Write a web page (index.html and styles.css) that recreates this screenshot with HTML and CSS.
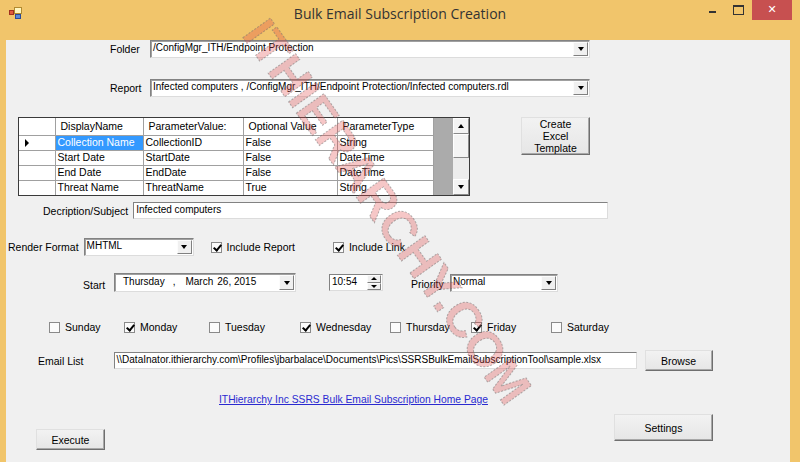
FILE: index.html
```html
<!DOCTYPE html>
<html lang="en">
<head>
    <meta charset="UTF-8">
    <meta name="viewport" content="width=device-width, initial-scale=1.0">
    <title>Bulk Email Subscription Creation</title>
    <link rel="stylesheet" href="styles.css">
</head>
<body>
    <div class="titlebar">
        <div class="tb-left">
            <svg class="app-icon" width="14" height="12" viewBox="0 0 14 12">
                <rect x="0.5" y="3.5" width="4" height="4" fill="#e05a3a" stroke="#a03020"/>
                <rect x="5.5" y="0.5" width="7" height="6" fill="#fff6c0" stroke="#b08a30"/>
                <rect x="6.5" y="7.5" width="5" height="4" fill="#5a8ad8" stroke="#2a4a98"/>
            </svg>
        </div>
        <div class="title">Bulk Email Subscription Creation</div>
        <div class="tb-right">
            <div class="ctl ctl-min"></div>
            <div class="ctl ctl-max"></div>
            <div class="ctl ctl-close">&#x2715;</div>
        </div>
    </div>

    <div class="client">
        <div class="row row-folder">
            <span class="lbl">Folder</span>
            <div class="combo combo-wide"><span class="val">/ConfigMgr_ITH/Endpoint Protection</span><span class="arrow"></span></div>
        </div>

        <div class="row row-report">
            <span class="lbl">Report</span>
            <div class="combo combo-wide"><span class="val">Infected computers , /ConfigMgr_ITH/Endpoint Protection/Infected computers.rdl</span><span class="arrow"></span></div>
        </div>

        <div class="row row-grid">
            <div class="grid">
                <div class="grid-body">
                    <table class="params">
                        <tr class="head">
                            <td class="rh"></td>
                            <td class="c1">DisplayName</td>
                            <td class="c2">ParameterValue:</td>
                            <td class="c3">Optional Value</td>
                            <td class="c4">ParameterType</td>
                        </tr>
                        <tr>
                            <td class="rh"><span class="cur"></span></td>
                            <td class="sel">Collection Name</td>
                            <td>CollectionID</td>
                            <td>False</td>
                            <td>String</td>
                        </tr>
                        <tr>
                            <td class="rh"></td>
                            <td>Start Date</td>
                            <td>StartDate</td>
                            <td>False</td>
                            <td>DateTime</td>
                        </tr>
                        <tr>
                            <td class="rh"></td>
                            <td>End Date</td>
                            <td>EndDate</td>
                            <td>False</td>
                            <td>DateTime</td>
                        </tr>
                        <tr>
                            <td class="rh"></td>
                            <td>Threat Name</td>
                            <td>ThreatName</td>
                            <td>True</td>
                            <td>String</td>
                        </tr>
                    </table>
                    <div class="grid-empty"></div>
                </div>
                <div class="vscroll">
                    <div class="sb-btn"><span class="up"></span></div>
                    <div class="sb-track"><div class="sb-thumb"></div></div>
                    <div class="sb-btn"><span class="down"></span></div>
                </div>
            </div>
            <button class="btn btn-template">Create<br>Excel<br>Template</button>
        </div>

        <div class="row row-subject">
            <span class="lbl">Decription/Subject</span>
            <div class="textbox tb-subject">Infected computers</div>
        </div>

        <div class="row row-render">
            <span class="lbl">Render Format</span>
            <div class="combo combo-render"><span class="val">MHTML</span><span class="arrow"></span></div>
            <label class="check chk-report"><span class="box on"></span>Include Report</label>
            <label class="check chk-link"><span class="box on"></span>Include Link</label>
        </div>

        <div class="row row-start">
            <span class="lbl lbl-start">Start</span>
            <div class="combo combo-date">
                <span class="val">
                    <span class="d-day">Thursday</span><span class="d-sep">,</span><span class="d-month">March</span><span class="d-num">26, 2015</span>
                </span>
                <span class="arrow"></span>
            </div>
            <div class="spin">
                <span class="val">10:54</span>
                <span class="spin-btns"><span class="sp"><span class="up"></span></span><span class="sp"><span class="down"></span></span></span>
            </div>
            <span class="lbl lbl-priority">Priority</span>
            <div class="combo combo-priority"><span class="val">Normal</span><span class="arrow"></span></div>
        </div>

        <div class="row row-days">
            <label class="check"><span class="box"></span>Sunday</label>
            <label class="check"><span class="box on"></span>Monday</label>
            <label class="check"><span class="box"></span>Tuesday</label>
            <label class="check"><span class="box on"></span>Wednesday</label>
            <label class="check"><span class="box"></span>Thursday</label>
            <label class="check"><span class="box on"></span>Friday</label>
            <label class="check"><span class="box"></span>Saturday</label>
        </div>

        <div class="row row-email">
            <span class="lbl">Email List</span>
            <div class="textbox tb-email">\\DataInator.ithierarchy.com\Profiles\jbarbalace\Documents\Pics\SSRSBulkEmailSubscriptionTool\sample.xlsx</div>
            <button class="btn btn-browse">Browse</button>
        </div>

        <div class="row row-link">
            <a class="home" href="#">ITHierarchy Inc SSRS Bulk Email Subscription Home Page</a>
        </div>

        <div class="row row-bottom">
            <button class="btn btn-execute">Execute</button>
            <button class="btn btn-settings">Settings</button>
        </div>
    </div>

    <div class="taskbar"><span class="tb-dark"></span><span class="tb-sep"></span></div>

    <!-- watermark over the whole shot -->
    <svg class="watermark" width="800" height="462" viewBox="0 0 800 462">
        <text x="241" y="35" transform="rotate(54.6 241 35)">ITHIERARCHY.COM</text>
    </svg>
</body>
</html>
```

FILE: styles.css
```css
*{
    margin: 0;
    padding: 0;
    box-sizing: border-box;
}
body{
    width: 800px;
    height: 462px;
    overflow: hidden;
    position: relative;
    background-color: #f1c56b;
    font-family: "Liberation Sans", Arial, sans-serif;
    font-size: 10.5px;
    color: #000;
}

/* title bar */
.titlebar{
    height: 28px;
    display: grid;
    grid-template-columns: 1fr auto 1fr;
}
.tb-left{
    padding: 7px 0 0 9px;
}
.title{
    font-family: "Open Sans", sans-serif;
    font-size: 14px;
    color: #333;
    padding-top: 4px;
}
.tb-right{
    display: flex;
    justify-content: flex-end;
    padding-right: 8px;
}
.ctl{
    width: 25px;
    height: 20px;
    position: relative;
}
.ctl-min::before{
    content: '';
    position: absolute;
    left: 9px;
    top: 11px;
    width: 7px;
    height: 2px;
    background: #333;
}
.ctl-max::before{
    content: '';
    position: absolute;
    left: 8px;
    top: 5px;
    width: 9px;
    height: 7px;
    border: 1px solid #333;
    border-top-width: 2px;
}
.ctl-close{
    width: 40px;
    margin-left: 2px;
    background-color: #c75050;
    color: #fff;
    font-size: 11px;
    font-family: "DejaVu Sans", sans-serif;
    text-align: center;
    line-height: 20px;
}

/* client area */
.client{
    margin-left: 6px;
    width: 784px;
    height: 424px;
    background-color: #f0f0f0;
}
.taskbar{
    margin-top: 3px;
    height: 7px;
    background-color: #e6e6e6;
    display: flex;
}
.tb-dark{
    width: 15px;
    background-color: #2a2018;
}
.tb-sep{
    width: 1px;
    margin-left: 30px;
    background-color: #999;
}

.row{
    display: flex;
    align-items: center;
}
.lbl{
    white-space: nowrap;
}

.row-folder{ margin-top: 12px; height: 18px; padding-left: 104px; }
.row-report{ margin-top: 21px; height: 18px; padding-left: 104px; }
.row-folder .lbl, .row-report .lbl{ width: 40px; }

.combo{
    display: flex;
    height: 18px;
    background-color: #fff;
    border: 1px solid;
    border-color: #828282 #dcdcdc #dcdcdc #828282;
    box-shadow: inset 1px 1px 0 #a0a0a0;
}
.combo .val{
    flex: 1;
    padding: 1px 0 0 2px;
    white-space: nowrap;
    overflow: hidden;
    font-size: 10px;
}
.combo .arrow, .spin .sp{
    width: 15px;
    margin: 1px 1px 1px 0;
    border: 1px solid;
    border-color: #fcfcfc #808080 #808080 #fcfcfc;
    background-color: #f0f0f0;
    display: flex;
    align-items: center;
    justify-content: center;
}
.combo .arrow::before{
    content: '';
    border-top: 4px solid #000;
    border-left: 3.5px solid transparent;
    border-right: 3.5px solid transparent;
}
.combo-wide{ width: 440px; }

/* parameter grid */
.row-grid{
    margin-top: 20px;
    height: 79px;
    padding-left: 12px;
    align-items: flex-start;
}
.grid{
    width: 452px;
    height: 79px;
    border: 1px solid #3a3a3a;
    display: flex;
    background-color: #ababab;
}
.grid-body{
    width: 434px;
    overflow: hidden;
    display: flex;
    align-items: flex-start;
}
.params{
    border-collapse: collapse;
    table-layout: fixed;
    width: 414px;
    background-color: #fff;
    font-size: 10.5px;
}
.params td{
    height: 15px;
    line-height: 13px;
    padding: 0 0 0 2px;
    border: 1px solid #a0a0a0;
    border-top: none;
    white-space: nowrap;
    overflow: hidden;
}
.params .head td{
    height: 17px;
    padding-left: 5px;
    border-bottom: 1px solid #a0a0a0;
}
.params .rh{ width: 36px; border-left: none; }
.params .c1{ width: 88px; }
.params .c2{ width: 100px; }
.params .c3{ width: 94px; }
.params .c4{ width: 96px; }
.params .sel{
    background-color: #3399ff;
    color: #fff;
}
.cur{
    display: block;
    margin-left: 4px;
    width: 0;
    height: 0;
    border-left: 4px solid #000;
    border-top: 4px solid transparent;
    border-bottom: 4px solid transparent;
}
.grid-empty{
    flex: 1;
}
.vscroll{
    width: 16px;
    display: flex;
    flex-direction: column;
    background-color: #ececec;
}
.sb-btn{
    height: 16px;
    display: flex;
    align-items: center;
    justify-content: center;
    background-color: #f4f4f4;
    border: 1px solid;
    border-color: #fff #8a8a8a #8a8a8a #fff;
}
.sb-track{
    flex: 1;
}
.sb-thumb{
    height: 24px;
    background-color: #f4f4f4;
    border: 1px solid;
    border-color: #fff #8a8a8a #8a8a8a #fff;
}
.up{
    border-bottom: 4px solid #000;
    border-left: 3.5px solid transparent;
    border-right: 3.5px solid transparent;
}
.down{
    border-top: 4px solid #000;
    border-left: 3.5px solid transparent;
    border-right: 3.5px solid transparent;
}

.btn{
    font-family: "Liberation Sans", Arial, sans-serif;
    font-size: 10.5px;
    color: #000;
    background: linear-gradient(#f2f2f2, #e6e6e6);
    border: 1px solid;
    border-color: #e0e0e0 #6f6f6f #6f6f6f #e0e0e0;
    box-shadow: inset -1px -1px 0 #a8a8a8;
}
.btn-template{
    margin-left: 51px;
    width: 69px;
    height: 38px;
    line-height: 12px;
}

.row-subject{ margin-top: 6px; height: 17px; padding-left: 37px; }
.textbox{
    height: 17px;
    background-color: #fff;
    border: 1px solid;
    border-color: #828282 #dcdcdc #dcdcdc #828282;
    padding: 1px 0 0 2px;
    font-size: 10px;
    white-space: nowrap;
    overflow: hidden;
}
.tb-subject{ margin-left: 5px; width: 475px; }

.row-render{ margin-top: 19px; height: 18px; padding-left: 2px; }
.combo-render{ margin-left: 5px; width: 110px; }
.check{
    display: flex;
    align-items: center;
    white-space: nowrap;
}
.box{
    width: 11px;
    height: 11px;
    margin-right: 5px;
    border: 1px solid #8a8a8a;
    background-color: #fbfbfb;
    position: relative;
}
.box.on::after{
    content: '';
    position: absolute;
    left: 3px;
    top: 0;
    width: 3px;
    height: 6px;
    border: solid #000;
    border-width: 0 2px 2px 0;
    transform: rotate(40deg);
}
.chk-report{ margin-left: 17px; }
.chk-link{ margin-left: 38px; }

.row-start{ margin-top: 17px; height: 19px; padding-left: 77px; }
.lbl-start{ padding-top: 5px; width: 31px; }
.combo-date{ width: 182px; height: 19px; }
.combo-date .val{ padding: 2px 0 0 8px; }
.d-sep{ margin-left: 8px; }
.d-month{ margin-left: 10px; }
.d-num{ margin-left: 4px; }
.spin{
    margin-left: 33px;
    width: 54px;
    height: 17px;
    display: flex;
    background-color: #fff;
    border: 1px solid;
    border-color: #828282 #dcdcdc #dcdcdc #828282;
}
.spin .val{
    flex: 1;
    padding: 1px 0 0 2px;
    font-size: 10px;
}
.spin-btns{
    display: flex;
    flex-direction: column;
    width: 15px;
}
.spin .sp{
    flex: 1;
    width: 14px;
    margin: 0;
}
.spin .up, .spin .down{
    border-left-width: 3px;
    border-right-width: 3px;
    border-top-width: 3px;
    border-bottom-width: 3px;
}
.spin .up{ border-top: none; }
.spin .down{ border-bottom: none; }
.lbl-priority{ margin-left: 28px; padding-top: 3px; width: 39px; }
.combo-priority{ width: 108px; }

.row-days{
    margin-top: 28px;
    height: 14px;
    padding-left: 43px;
    display: grid;
    grid-template-columns: 75px 85px 91px 90px 81px 80px auto;
}

.row-email{ margin-top: 16px; height: 21px; padding-left: 32px; }
.tb-email{ margin-left: 30px; width: 523px; }
.btn-browse{ margin-left: 8px; width: 68px; height: 21px; }

.row-link{ margin-top: 22px; height: 13px; padding-left: 213px; }
.home{
    font-size: 10.3px;
    color: #2a2ad0;
    text-decoration: underline;
}

.row-bottom{
    margin-top: 8px;
    height: 36px;
    padding-left: 30px;
    align-items: flex-start;
}
.btn-execute{
    margin-top: 15px;
    width: 69px;
    height: 21px;
}
.btn-settings{
    margin-left: 509px;
    width: 99px;
    height: 27px;
}

/* watermark */
.watermark{
    position: absolute;
    left: 0;
    top: 0;
    pointer-events: none;
}
.watermark text{
    font-family: "Liberation Sans", sans-serif;
    font-weight: bold;
    font-size: 49px;
    fill: rgba(226, 70, 70, 0.3);
    stroke: rgba(110, 110, 110, 0.5);
    stroke-width: 1;
    stroke-dasharray: 2 1.5;
}
```
